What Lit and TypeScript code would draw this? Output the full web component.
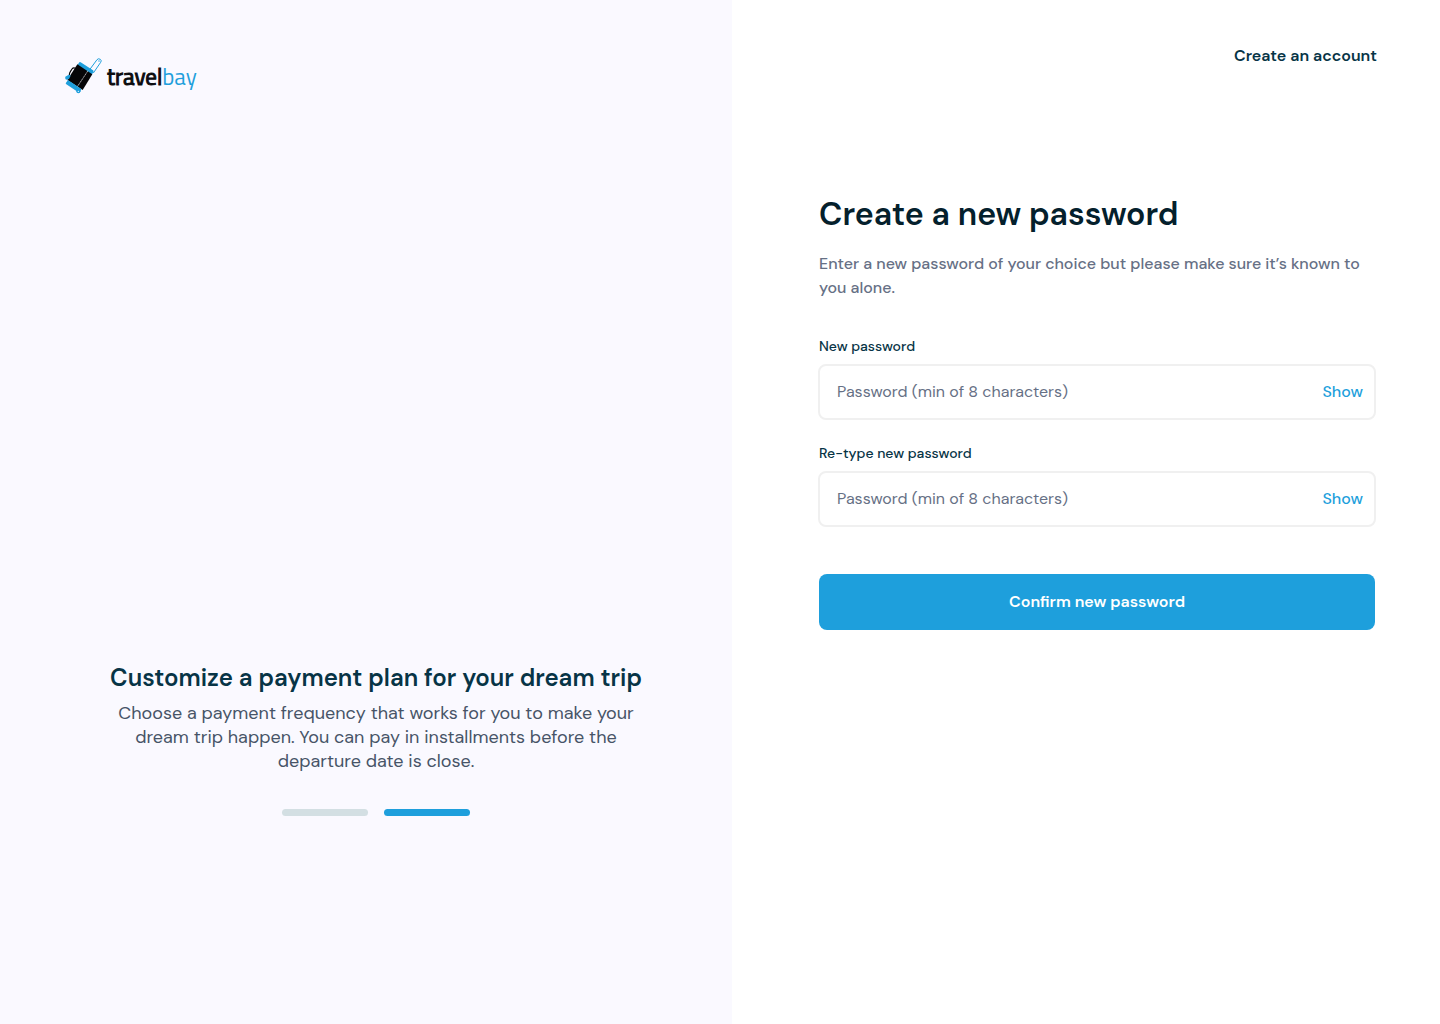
import { LitElement, html, css } from "lit";
import { customElement, property, state } from "lit/decorators.js";

@customElement("brand-logo")
class BrandLogo extends LitElement {
  static styles = css`
    :host {
      display: block;
    }
    .link {
      display: inline-flex;
      align-items: center;
      gap: 3px;
      text-decoration: none;
    }
    .mark {
      display: block;
      width: 42px;
      height: 42px;
    }
    .name {
      padding-top: 2px;
      font: 400 23px/32px "Titillium Web", Ubuntu, "Noto Sans", "Open Sans", sans-serif;
      color: #0b0b0f;
      -webkit-text-stroke: 1px currentColor;
    }
    .accent {
      color: #1e9fdc;
      -webkit-text-stroke: 0;
    }
  `;

  render() {
    return html`
      <a class="link" href="#">
        <svg class="mark" viewBox="0 0 126 126" fill="none" aria-hidden="true">
          <path d="M83 44 105 14q4-5 10-1 5 4 1 9L94 54" stroke="#1e9fdc" stroke-width="3" />
          <circle cx="111" cy="18" r="2" fill="#1e9fdc" />
          <path d="M51 23q2-3 5-1L93 46q3 2 1 5l-5 9L45 32z" fill="#1e9fdc" />
          <path d="M46 28 91 58 62 105 16 75z" fill="#060608" />
          <path d="M78 47 46 95" stroke="#f4f4fa" stroke-width="2" stroke-dasharray="5 1" />
          <path d="m18 75 40 27-3 8q-2 4-6 2L13 88q-3-2-1-5z" fill="#1e9fdc" />
          <circle cx="49" cy="109" r="6" fill="#1e9fdc" />
          <circle cx="49" cy="109" r="2" fill="#faf9ff" />
          <path d="M22 61q-1-5 3-11l5-8q3-4 8-3l4 2" stroke="#060608" stroke-width="3.5" />
          <path d="m10 65 10-6 6 3-5 10-9 2q-4-4-2-9z" fill="#1e9fdc" />
        </svg>
        <span class="name">travel<span class="accent">bay</span></span>
      </a>
    `;
  }
}

@customElement("password-field")
class PasswordField extends LitElement {
  @property() label = "";
  @property() name = "";
  @state() private visible = false;

  static styles = css`
    :host {
      display: block;
    }
    .label {
      display: block;
      font-size: 14px;
      font-weight: 500;
      line-height: 20px;
      color: #073446;
      margin-bottom: 8px;
    }
    .box {
      display: flex;
      align-items: center;
      box-sizing: border-box;
      height: 56px;
      margin: 0 -1px;
      padding: 0 11px 0 17px;
      border: 2px solid #f0f0f0;
      border-radius: 8px;
      background: #fff;
    }
    .box:focus-within {
      border-color: #1e9fdc;
    }
    .input {
      flex: 1;
      min-width: 0;
      border: 0;
      padding: 0;
      outline: none;
      background: transparent;
      font: inherit;
      line-height: 24px;
      color: #073446;
    }
    .input::placeholder {
      color: #667085;
      opacity: 1;
    }
    .toggle {
      border: 0;
      padding: 0;
      background: none;
      font: inherit;
      font-weight: 500;
      color: #1e9fdc;
      cursor: pointer;
    }
  `;

  render() {
    return html`
      <label class="label" for="field">${this.label}</label>
      <div class="box">
        <input
          class="input"
          id="field"
          name=${this.name}
          type=${this.visible ? "text" : "password"}
          autocomplete="new-password"
          placeholder="Password (min of 8 characters)"
        />
        <button class="toggle" type="button" @click=${() => (this.visible = !this.visible)}>
          ${this.visible ? "Hide" : "Show"}
        </button>
      </div>
    `;
  }
}

@customElement("app-root")
class AppRoot extends LitElement {
  @state() private slide = 1;

  static styles = css`
    :host {
      display: grid;
      grid-template-columns: 61fr 59fr;
      min-height: 100vh;
      font-family: "DM Sans", Inter, "Liberation Sans", sans-serif;
      font-size: 16px;
      line-height: 24px;
      color: #073446;
      background: #fff;
    }
    .promo {
      display: flex;
      flex-direction: column;
      justify-content: space-between;
      box-sizing: border-box;
      padding: 55px 42px 208px 62px;
      background: #faf9ff;
    }
    .caption {
      text-align: center;
    }
    .promo-title {
      margin: 0 0 7px;
      font-size: 24px;
      font-weight: 600;
      line-height: 32px;
    }
    .promo-text {
      margin: 0;
      font-size: 18px;
      color: #475467;
    }
    .dots {
      display: flex;
      justify-content: center;
      gap: 16px;
      margin-top: 36px;
    }
    .dot {
      width: 86px;
      height: 7px;
      padding: 0;
      border: 0;
      border-radius: 4px;
      background: #d3dfe3;
      cursor: pointer;
    }
    .dot.active {
      background: #1e9fdc;
    }
    .panel {
      box-sizing: border-box;
      padding: 44px 63px 64px 87px;
    }
    .top {
      display: flex;
      justify-content: flex-end;
    }
    .signup {
      font-weight: 600;
      color: #073446;
      text-decoration: none;
    }
    .form {
      margin-top: 126px;
      padding-right: 2px;
    }
    .title {
      margin: 0 0 18px;
      font-size: 32px;
      font-weight: 600;
      line-height: 40px;
      color: #04202c;
    }
    .intro {
      margin: 0;
      font-weight: 500;
      color: #667085;
    }
    .fields {
      display: grid;
      gap: 23px;
      margin: 36px 0 47px;
    }
    .submit {
      display: block;
      width: 100%;
      height: 56px;
      border: 0;
      border-radius: 8px;
      background: #1e9fdc;
      color: #fff;
      font: inherit;
      font-weight: 600;
      cursor: pointer;
    }
  `;

  render() {
    return html`
      <section class="promo">
        <brand-logo></brand-logo>
        <div class="caption">
          <h2 class="promo-title">Customize a payment plan for your dream trip</h2>
          <p class="promo-text">
            Choose a payment frequency that works for you to make your<br />
            dream trip happen. You can pay in installments before the<br />
            departure date is close.
          </p>
          <div class="dots">
            ${[0, 1].map(
              (i) => html`<button
                class="dot ${i === this.slide ? "active" : ""}"
                type="button"
                aria-label="Slide ${i + 1}"
                @click=${() => (this.slide = i)}
              ></button>`
            )}
          </div>
        </div>
      </section>
      <main class="panel">
        <nav class="top"><a class="signup" href="#">Create an account</a></nav>
        <form class="form" @submit=${(e: Event) => e.preventDefault()}>
          <h1 class="title">Create a new password</h1>
          <p class="intro">
            Enter a new password of your choice but please make sure it’s known to you alone.
          </p>
          <div class="fields">
            <password-field label="New password" name="password"></password-field>
            <password-field label="Re-type new password" name="confirm"></password-field>
          </div>
          <button class="submit" type="submit">Confirm new password</button>
        </form>
      </main>
    `;
  }
}
